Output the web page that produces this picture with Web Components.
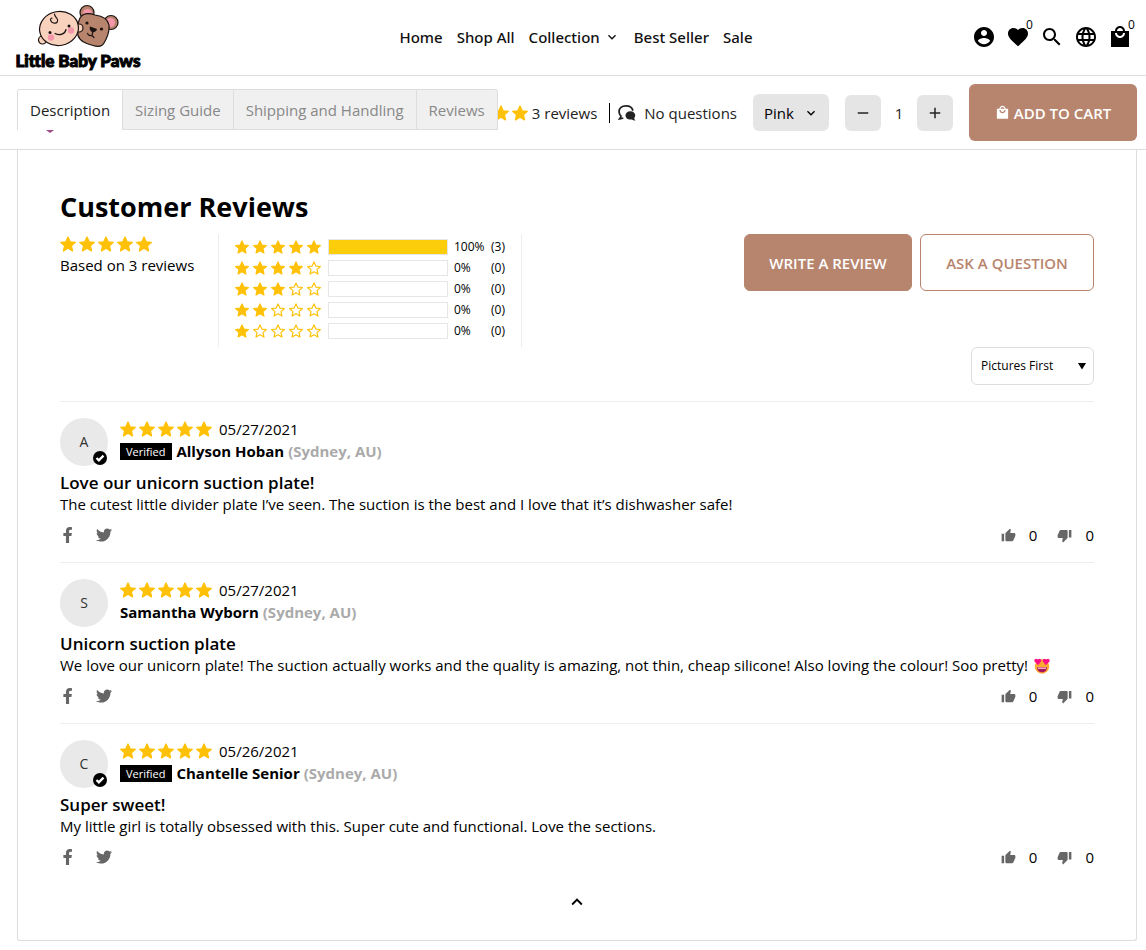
<!DOCTYPE html>
<html lang="en">
<head>
<meta charset="utf-8">
<meta name="viewport" content="width=device-width, initial-scale=1">
<title>Little Baby Paws</title>
<style>
  body {
    margin: 0;
    background: #fff;
    color: #000;
    font: 400 15px/22px "Open Sans", "Noto Sans", sans-serif;
    --accent: #b7846d;
    --line: #ddd;
    --star: #ffc107;
  }
</style>
</head>
<body>
<site-header></site-header>
<product-bar></product-bar>
<review-panel>
  <customer-review author="Allyson Hoban" place="(Sydney, AU)" date="05/27/2021" verified>
    <span slot="title">Love our unicorn suction plate!</span>
    The cutest little divider plate I’ve seen. The suction is the best and I love that it’s dishwasher safe!
  </customer-review>
  <customer-review author="Samantha Wyborn" place="(Sydney, AU)" date="05/27/2021">
    <span slot="title">Unicorn suction plate</span>
    We love our unicorn plate! The suction actually works and the quality is amazing, not thin, cheap silicone! Also loving the colour! Soo pretty! <heart-eyes></heart-eyes>
  </customer-review>
  <customer-review author="Chantelle Senior" place="(Sydney, AU)" date="05/26/2021" verified>
    <span slot="title">Super sweet!</span>
    My little girl is totally obsessed with this. Super cute and functional. Love the sections.
  </customer-review>
</review-panel>

<script>
const icons = {
  account: '<path d="M12 2C6.48 2 2 6.48 2 12s4.48 10 10 10 10-4.48 10-10S17.52 2 12 2zm0 3c1.66 0 3 1.34 3 3s-1.34 3-3 3-3-1.34-3-3 1.34-3 3-3zm0 14.2c-2.5 0-4.71-1.28-6-3.22.03-1.99 4-3.08 6-3.08 1.99 0 5.97 1.09 6 3.08-1.29 1.94-3.5 3.22-6 3.22z"/>',
  heart: '<path d="M12 21.35l-1.45-1.32C5.4 15.36 2 12.28 2 8.5 2 5.42 4.42 3 7.5 3c1.74 0 3.41.81 4.5 2.09C13.09 3.81 14.76 3 16.5 3 19.58 3 22 5.42 22 8.5c0 3.78-3.4 6.86-8.55 11.54L12 21.35z"/>',
  search: '<path d="M15.5 14h-.79l-.28-.27C15.41 12.59 16 11.11 16 9.5 16 5.91 13.09 3 9.5 3S3 5.91 3 9.5 5.91 16 9.5 16c1.61 0 3.09-.59 4.23-1.57l.27.28v.79l5 4.99L20.49 19l-4.99-5zm-6 0C7.01 14 5 11.99 5 9.5S7.01 5 9.5 5 14 7.01 14 9.5 11.99 14 9.5 14z"/>',
  globe: '<path d="M11.99 2C6.47 2 2 6.48 2 12s4.47 10 9.99 10C17.52 22 22 17.52 22 12S17.52 2 11.99 2zm6.93 6h-2.95c-.32-1.25-.78-2.45-1.38-3.56 1.84.63 3.37 1.91 4.33 3.56zM12 4.04c.83 1.2 1.48 2.53 1.91 3.96h-3.82c.43-1.43 1.08-2.76 1.91-3.96zM4.26 14C4.1 13.36 4 12.69 4 12s.1-1.36.26-2h3.38c-.08.66-.14 1.32-.14 2 0 .68.06 1.34.14 2H4.26zm.82 2h2.95c.32 1.25.78 2.45 1.38 3.56-1.84-.63-3.37-1.9-4.33-3.56zm2.95-8H5.08c.96-1.66 2.49-2.93 4.33-3.56C8.81 5.55 8.35 6.75 8.03 8zM12 19.96c-.83-1.2-1.48-2.53-1.91-3.96h3.82c-.43 1.43-1.08 2.76-1.91 3.96zM14.34 14H9.66c-.09-.66-.16-1.32-.16-2 0-.68.07-1.35.16-2h4.68c.09.65.16 1.32.16 2 0 .68-.07 1.34-.16 2zm.25 5.56c.6-1.11 1.06-2.31 1.38-3.56h2.95c-.96 1.65-2.49 2.93-4.33 3.56zM16.36 14c.08-.66.14-1.32.14-2 0-.68-.06-1.34-.14-2h3.38c.16.64.26 1.31.26 2s-.1 1.36-.26 2h-3.38z"/>',
  bag: '<path d="M21 6h-4c0-2.76-2.24-5-5-5S7 3.24 7 6H3v16h18V6zm-9-3c1.66 0 3 1.34 3 3H9c0-1.66 1.34-3 3-3zm0 10c-2.76 0-5-2.24-5-5h2c0 1.66 1.34 3 3 3s3-1.34 3-3h2c0 2.76-2.24 5-5 5z"/>',
  down: '<path d="M7.41 8.59L12 13.17l4.59-4.58L18 10l-6 6-6-6z"/>',
  up: '<path d="M7.41 15.41L12 10.83l4.59 4.58L18 14l-6-6-6 6z"/>',
  minus: '<path d="M5 11h14v2H5z"/>',
  plus: '<path d="M19 13h-6v6h-2v-6H5v-2h6V5h2v6h6z"/>',
  caret: '<path d="M5 7h14l-7 11z"/>',
  chat: '<path d="M7 18.500c-1.200.8-2.800 1.200-4.800 1.200 1.500-1.500 1.800-2.700 1.600-3.800C2.300 14.300 1.400 12.300 1.400 10 1.400 5.400 5.200 2.400 10.500 2.400c5 0 8.700 2.600 9.300 6.600" fill="none" stroke="currentColor" stroke-width="2.400"/><path d="M16.500 9.500c3.700 0 6.500 2.200 6.500 5.500 0 1.500-.6 2.700-1.300 3.500 0 1.500.7 2.700 1.800 3.700-2.200 0-3.700-.6-4.800-1.500-5.200.7-8.700-1.900-8.700-5.700 0-3.300 2.800-5.500 6.500-5.500z"/>',
  thumb: '<path d="M1 21h4V9H1v12zm22-11c0-1.1-.9-2-2-2h-6.31l.95-4.57.03-.32c0-.41-.17-.79-.44-1.06L14.17 1 7.59 7.59C7.22 7.95 7 8.45 7 9v10c0 1.1.9 2 2 2h9c.83 0 1.54-.5 1.84-1.22l3.02-7.05c.09-.23.14-.47.14-.73v-2z"/>',
  thumbDown: '<path transform="rotate(180 12 12)" d="M1 21h4V9H1v12zm22-11c0-1.1-.9-2-2-2h-6.31l.95-4.57.03-.32c0-.41-.17-.79-.44-1.06L14.17 1 7.59 7.59C7.22 7.95 7 8.45 7 9v10c0 1.1.9 2 2 2h9c.83 0 1.54-.5 1.84-1.22l3.02-7.05c.09-.23.14-.47.14-.73v-2z"/>',
  facebook: '<path transform="translate(4) scale(.047)" d="M279.14 288l14.22-92.66h-88.91v-60.13c0-25.35 12.42-50.06 52.24-50.06h40.42V6.26S260.43 0 225.36 0c-73.22 0-121.08 44.38-121.08 124.72v70.62H22.89V288h81.39v224h100.17V288z"/>',
  twitter: '<path transform="scale(.047)" d="M459.37 151.716c.325 4.548.325 9.097.325 13.645 0 138.72-105.583 298.558-298.558 298.558-59.452 0-114.68-17.219-161.137-47.106 8.447.974 16.568 1.299 25.34 1.299 49.055 0 94.213-16.568 130.274-44.832-46.132-.975-84.792-31.188-98.112-72.772 6.498.974 12.995 1.624 19.818 1.624 9.421 0 18.843-1.3 27.614-3.573-48.081-9.747-84.143-51.98-84.143-102.985v-1.299c13.969 7.797 30.214 12.67 47.431 13.319-28.264-18.843-46.781-51.005-46.781-87.391 0-19.492 5.197-37.36 14.294-52.954 51.655 63.675 129.3 105.258 216.365 109.807-1.624-7.797-2.599-15.918-2.599-24.04 0-57.828 46.782-104.934 104.934-104.934 30.213 0 57.502 12.67 76.67 33.137 23.715-4.548 46.456-13.32 66.599-25.34-7.798 24.366-24.366 44.833-46.132 57.827 21.117-2.273 41.584-8.122 60.426-16.243-14.292 20.791-32.161 39.308-52.628 54.253z"/>',
  check: '<circle cx="12" cy="12" r="12"/><path d="M6 12l4 4 8-8" fill="none" stroke="#fff" stroke-width="4"/>',
};

const reset = `
  :host, * { box-sizing: border-box; }
  a { color: inherit; text-decoration: none; }
  button, select, input { font: inherit; color: inherit; margin: 0; border: 0; background: none; }
  button { display: flex; align-items: center; justify-content: center; padding: 0; cursor: pointer; }
`;

function define(name, render) {
  customElements.define(name, class extends HTMLElement {
    constructor() {
      super();
      this.attachShadow({ mode: 'open' });
    }

    connectedCallback() {
      const template = document.createElement('template');
      template.innerHTML = `<style>${reset}</style>${render(this)}`;
      this.shadowRoot.replaceChildren(template.content.cloneNode(true));
    }
  });
}

define('shop-icon', el => `
  <style>
    :host { display: inline-flex; flex: none; width: var(--size, 24px); height: var(--size, 24px); }
    svg { width: 100%; height: 100%; }
  </style>
  <svg viewBox="0 0 24 24" fill="currentColor" aria-hidden="true">${icons[el.getAttribute('name')]}</svg>
`);

define('star-rating', el => {
  const value = Number(el.getAttribute('value') || 5);
  const star = n => `
    <svg viewBox="0 0 24 24" class="${n <= value ? 'full' : 'empty'}">
      <path d="M12 1.500l3.200 7.200 7.800.8-5.900 5.200 1.700 7.700L12 18.400l-6.800 4 1.700-7.700L1 9.500l7.800-.8z"/>
    </svg>`;
  return `
    <style>
      :host { display: inline-flex; flex: none; gap: 3px; }
      :host([small]) { gap: 4px; }
      svg { width: 16px; height: 16px; fill: var(--star); stroke: var(--star); stroke-width: 2; stroke-linejoin: round; overflow: visible; }
      :host([small]) svg { width: 14px; height: 14px; }
      svg.empty { fill: none; }
    </style>
    ${[1, 2, 3, 4, 5].map(star).join('')}`;
});

define('heart-eyes', () => `
  <style>
    :host { display: inline-block; width: 18px; height: 16px; padding-left: 2px; vertical-align: -3px; }
    svg { display: block; }
  </style>
  <svg width="16" height="16" viewBox="0 0 16 16" role="img" aria-label="heart eyes">
    <circle cx="8" cy="8.500" r="7.200" fill="#ffa930"/>
    <path d="M3 9.300h10c0 3-2 5-5 5s-5-2-5-5z" fill="#a3195b"/>
    <path d="M3.500 9.500h9l-.6 1.500H4.100z" fill="#f6a6c8"/>
    <path d="M4.200 7.300L.5 3.500C-.4 1.500 2-.2 3.700 1.500 5.400-.2 7.800 1 7.200 3.300z" fill="#ff0f86"/>
    <path d="M11.800 7.300l3.700-3.800c.9-2-1.500-3.700-3.200-2C10.600-.2 8.200 1 8.800 3.300z" fill="#ff0f86"/>
  </svg>
`);

define('site-logo', () => `
  <style>
    :host { display: block; width: 124px; }
    a { display: flex; flex-direction: column; align-items: center; font: 900 17px/18px Lato, sans-serif; -webkit-text-stroke: 1px; white-space: nowrap; }
    svg { display: block; margin-bottom: 4px; }
  </style>
  <a href="#">
    <svg width="82" height="44" viewBox="0 0 82 44" fill="none" stroke="#1c1210" stroke-width="1.200" stroke-linecap="round" aria-hidden="true">
      <circle cx="50" cy="8.500" r="7" fill="#b7846d"/>
      <circle cx="50.500" cy="9.500" r="4.500" fill="#f497aa" stroke="none"/>
      <circle cx="74" cy="18.500" r="7" fill="#b7846d"/>
      <circle cx="73.500" cy="18.500" r="4.500" fill="#f497aa" stroke="none"/>
      <path d="M43 14c3-5 9-5 15-3 7 1 13 4 14 10 .5 6-2 13-5 18-2 4-6 4-11 2.500-7-2-13-4-15-10-1-6-1-12 2-17.500z" fill="#b7846d"/>
      <circle cx="5.500" cy="36" r="4" fill="#f9d2be"/>
      <circle cx="42" cy="24" r="4" fill="#f9d2be"/>
      <ellipse cx="22" cy="24.500" rx="19.500" ry="17" fill="#f9d2be" transform="rotate(-10 22 24.500)"/>
      <path d="M15 14c-2.500.5-1.500 4 1.500 5 4 1 5-2.500 3.500-4.500-1-1.500-2.500-2.500-2.500-4.500"/>
      <path d="M18 29.500c5 2.500 10 .5 11-4"/>
      <g stroke="none">
        <circle cx="14" cy="33.500" r="3.200" fill="#f497aa"/>
        <circle cx="34" cy="26.500" r="3.200" fill="#f497aa"/>
        <g fill="#1c1210">
          <circle cx="13" cy="28.500" r="1.500"/>
          <circle cx="32" cy="22" r="1.500"/>
          <circle cx="50" cy="19" r="1.600"/>
          <circle cx="64.500" cy="25" r="1.600"/>
          <path d="M53 22.500l7 2.500c0 2-3.500 4-5 3-2-1-3-4-2-5.500z"/>
        </g>
      </g>
      <path d="M56 27l-1 4.500c-2 .6-3.500 0-4.500-2M55 31.500l2 2"/>
    </svg>
    Little Baby Paws
  </a>
`);

define('site-header', () => `
  <style>
    :host { display: grid; grid-template-columns: 1fr auto 1fr; align-items: center; height: 76px; padding: 0 14px 2px 16px; border-bottom: 1px solid var(--line); }
    nav { display: flex; align-items: center; gap: 14px; padding-left: 4px; color: #111; font-family: "Noto Sans", sans-serif; font-weight: 500; --size: 16px; }
    nav a { display: flex; align-items: center; gap: 4px; white-space: nowrap; }
    .tools { display: flex; justify-content: flex-end; gap: 10px; }
    .tools button { position: relative; }
    .count { position: absolute; left: 20px; top: -8px; font-size: 12px; line-height: 16px; }
  </style>
  <site-logo></site-logo>
  <nav>
    <a href="#">Home</a>
    <a href="#">Shop All</a>
    <a href="#">Collection <shop-icon name="down"></shop-icon></a>
    <a href="#">Best Seller</a>
    <a href="#">Sale</a>
  </nav>
  <div class="tools">
    <button aria-label="Account"><shop-icon name="account"></shop-icon></button>
    <button aria-label="Wishlist"><shop-icon name="heart"></shop-icon><span class="count">0</span></button>
    <button aria-label="Search"><shop-icon name="search"></shop-icon></button>
    <button aria-label="Language"><shop-icon name="globe"></shop-icon></button>
    <button aria-label="Cart"><shop-icon name="bag"></shop-icon><span class="count">0</span></button>
  </div>
`);

define('product-tabs', () => `
  <style>
    :host { display: flex; border: 1px solid var(--line); border-bottom: 0; border-radius: 3px 3px 0 0; overflow: hidden; background: #fff; }
    button { height: 40px; padding: 0 12px; border-bottom: 1px solid var(--line); background: #f0f0f0; color: #888; white-space: nowrap; }
    button + button { border-left: 1px solid var(--line); }
    [aria-selected="true"] { background: #fff; color: #222; border-bottom: 0; }
  </style>
  <button role="tab" aria-selected="true">Description</button>
  <button role="tab">Sizing Guide</button>
  <button role="tab">Shipping and Handling</button>
  <button role="tab">Reviews</button>
`);

define('product-bar', () => `
  <style>
    :host { display: flex; height: 74px; padding: 0 9px 0 17px; border-bottom: 1px solid var(--line); }
    .tabs { position: relative; z-index: 1; flex: none; margin-top: 13px; }
    .thumb { position: absolute; left: 28px; top: 41px; }
    .product { display: flex; flex: 1; align-items: center; justify-content: flex-end; gap: 16px; min-width: 0; color: #222; white-space: nowrap; }
    .product > * { flex: none; }
    .summary, .questions { display: flex; align-items: center; gap: 4px; }
    .questions { gap: 8px; --size: 18px; }
    .rule { width: 1px; height: 20px; margin: 0 -8px 0 -4px; background: #000; }
    .option { display: grid; align-items: center; width: 76px; height: 37px; border-radius: 6px; background: #e5e5e5; color: #000; --size: 16px; }
    .option > * { grid-area: 1 / 1; }
    .option shop-icon { justify-self: end; margin-right: 10px; pointer-events: none; }
    select { appearance: none; width: 100%; height: 100%; padding: 0 11px; }
    .quantity { display: flex; align-items: center; --size: 18px; }
    .quantity button { width: 36px; height: 36px; border-radius: 6px; background: #e5e5e5; }
    .quantity input { width: 36px; padding: 0; text-align: center; }
    .cart { gap: 4px; width: 168px; height: 57px; border-radius: 6px; background: var(--accent); color: #fff; font-weight: 600; --size: 15px; }
  </style>
  <div class="tabs">
    <product-tabs role="tablist"></product-tabs>
    <svg class="thumb" width="10" height="3" aria-hidden="true"><path d="M1 0h8L5 3z" fill="#a04a8c"/></svg>
  </div>
  <div class="product">
    <span class="summary"><star-rating></star-rating>3 reviews</span>
    <span class="rule"></span>
    <span class="questions"><shop-icon name="chat"></shop-icon>No questions</span>
    <span class="option">
      <select aria-label="Colour"><option>Pink</option></select>
      <shop-icon name="down"></shop-icon>
    </span>
    <span class="quantity">
      <button aria-label="Less"><shop-icon name="minus"></shop-icon></button>
      <input aria-label="Quantity" value="1">
      <button aria-label="More"><shop-icon name="plus"></shop-icon></button>
    </span>
    <button class="cart"><shop-icon name="bag"></shop-icon>ADD TO CART</button>
  </div>
`);

define('rating-histogram', () => {
  const row = (stars, percent, count) => `
    <div class="row">
      <star-rating small value="${stars}"></star-rating>
      <span class="bar"><span style="width: ${percent}%"></span></span>
      <span class="percent">${percent}%</span>
      <span>(${count})</span>
    </div>`;
  return `
    <style>
      :host { display: block; width: 304px; height: 113px; padding: 2px 16px; border: solid #eee; border-width: 0 1px; font-size: 12px; line-height: 21px; }
      .row { display: flex; align-items: center; height: 21px; }
      .bar { width: 120px; height: 16px; margin: 0 6px 0 7px; border: 1px solid #e6e6e6; }
      .bar span { display: block; height: 100%; background: #fbcd0a; }
      .percent { width: 37px; }
    </style>
    ${row(5, 100, 3)}${row(4, 0, 0)}${row(3, 0, 0)}${row(2, 0, 0)}${row(1, 0, 0)}`;
});

define('review-panel', () => `
  <style>
    :host { display: block; margin: 0 9px 9px 17px; padding: 40px 42px 27px; border: 1px solid var(--line); border-top: 0; border-radius: 0 0 3px 3px; }
    h2 { margin: 0; font-size: 27px; line-height: 34px; font-weight: 700; }
    .overview { display: flex; align-items: flex-start; margin-top: 10px; }
    .average { display: flex; flex-direction: column; width: 158px; padding-top: 2px; gap: 2px; }
    .actions { display: flex; gap: 8px; margin-left: auto; }
    .actions button { width: 174px; height: 57px; border: 1px solid var(--accent); border-radius: 6px; color: var(--accent); font-weight: 600; white-space: nowrap; }
    .actions .write { width: 168px; background: var(--accent); color: #fff; }
    .sort { display: grid; align-items: center; width: 123px; height: 38px; margin-left: auto; border: 1px solid var(--line); border-radius: 6px; font-size: 12px; --size: 14px; }
    .sort > * { grid-area: 1 / 1; }
    .sort shop-icon { justify-self: end; margin-right: 4px; pointer-events: none; }
    select { appearance: none; width: 100%; height: 100%; padding: 0 9px; }
    .reviews { margin-top: 16px; }
    .top { margin: 7px auto 0; --size: 22px; }
  </style>
  <h2>Customer Reviews</h2>
  <div class="overview">
    <div class="average"><star-rating></star-rating>Based on 3 reviews</div>
    <rating-histogram></rating-histogram>
    <div class="actions">
      <button class="write">WRITE A REVIEW</button>
      <button>ASK A QUESTION</button>
    </div>
  </div>
  <div class="sort">
    <select aria-label="Sort reviews"><option>Pictures First</option></select>
    <shop-icon name="caret"></shop-icon>
  </div>
  <div class="reviews"><slot></slot></div>
  <button class="top" aria-label="Back to top"><shop-icon name="up"></shop-icon></button>
`);

define('customer-review', el => {
  const author = el.getAttribute('author');
  const verified = el.hasAttribute('verified');
  return `
    <style>
      :host { display: block; padding: 16px 0; border-top: 1px solid #eee; }
      header { display: flex; gap: 12px; }
      .avatar { position: relative; display: grid; place-items: center; width: 48px; height: 48px; border-radius: 50%; background: #e9e9e9; color: #333; font-size: 14px; }
      .avatar shop-icon { position: absolute; right: 1px; bottom: 1px; color: #000; --size: 14px; }
      .line { display: flex; align-items: center; height: 22px; gap: 4px; }
      .line star-rating { margin-right: 3px; }
      .badge { padding: 0 7px 0 6px; background: #000; color: #fff; font-size: 11px; line-height: 17px; }
      .author { font-weight: 700; }
      .place { font-weight: 700; color: #aaa; }
      h3 { margin: 6px 0 0; font-size: 17px; line-height: 21px; font-weight: 600; }
      p { margin: 0; }
      footer { display: flex; align-items: center; height: 22px; margin-top: 9px; }
      footer a, footer shop-icon { color: #666; }
      .social { display: flex; gap: 20px; flex: 1; --size: 16px; }
      .social a { display: flex; }
      .votes { display: flex; gap: 20px; --size: 15px; }
      .votes button { gap: 13px; }
    </style>
    <header>
      <div class="avatar">${author[0]}${verified ? '<shop-icon name="check"></shop-icon>' : ''}</div>
      <div>
        <div class="line"><star-rating></star-rating>${el.getAttribute('date')}</div>
        <div class="line">
          ${verified ? '<span class="badge">Verified</span>' : ''}
          <span class="author">${author}</span>
          <span class="place">${el.getAttribute('place')}</span>
        </div>
      </div>
    </header>
    <h3><slot name="title"></slot></h3>
    <p><slot></slot></p>
    <footer>
      <div class="social">
        <a href="#" aria-label="Share on Facebook"><shop-icon name="facebook"></shop-icon></a>
        <a href="#" aria-label="Share on Twitter"><shop-icon name="twitter"></shop-icon></a>
      </div>
      <div class="votes">
        <button aria-label="Helpful"><shop-icon name="thumb"></shop-icon>0</button>
        <button aria-label="Not helpful"><shop-icon name="thumbDown"></shop-icon>0</button>
      </div>
    </footer>`;
});
</script>
</body>
</html>
